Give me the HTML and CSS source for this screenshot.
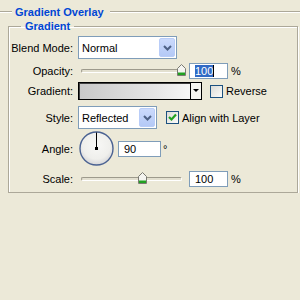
FILE: index.html
```html
<!DOCTYPE html>
<html lang="en">
<head>
    <meta charset="UTF-8">
    <title>Gradient Overlay</title>
    <link rel="stylesheet" href="styles.css">
</head>
<body>
    <div class="panel">
        <div class="group-title">
            <span class="rule rule-short"></span>
            <span class="title">Gradient Overlay</span>
            <span class="rule"></span>
        </div>

        <fieldset class="group">
            <legend>Gradient</legend>

            <div class="row row-blend">
                <span class="lbl">Blend Mode:</span>
                <div class="combo combo-blend">
                    <span class="combo-text">Normal</span>
                    <span class="combo-btn">
                        <svg width="9" height="6" viewBox="0 0 9 6"><polyline points="1,1 4.5,4.5 8,1" fill="none" stroke="#4d6185" stroke-width="2"/></svg>
                    </span>
                </div>
            </div>

            <div class="row row-opacity">
                <span class="lbl">Opacity:</span>
                <div class="slider">
                    <span class="track"></span>
                    <span class="thumb" style="--pos: 1">
                        <svg width="9" height="12" viewBox="0 0 9 12"><path d="M0.5 4.5 L4.5 0.5 L8.5 4.5 V11.5 H0.5 Z" fill="#f4f4f0" stroke="#7a7a72"/><rect x="1" y="8.5" width="7" height="2.5" fill="#21a121"/></svg>
                    </span>
                </div>
                <div class="field field-num"><span class="sel">100</span><span class="caret"></span></div>
                <span class="unit">%</span>
            </div>

            <div class="row row-gradient">
                <span class="lbl">Gradient:</span>
                <div class="grad-box">
                    <span class="grad-fill"></span>
                    <span class="grad-arrow"></span>
                </div>
                <span class="check"></span>
                <span class="check-label">Reverse</span>
            </div>

            <div class="row row-style">
                <span class="lbl">Style:</span>
                <div class="combo combo-style">
                    <span class="combo-text">Reflected</span>
                    <span class="combo-btn">
                        <svg width="9" height="6" viewBox="0 0 9 6"><polyline points="1,1 4.5,4.5 8,1" fill="none" stroke="#4d6185" stroke-width="2"/></svg>
                    </span>
                </div>
                <span class="check check-on">
                    <svg width="11" height="11" viewBox="0 0 11 11"><polyline points="2,5 4.5,7.5 9,2.5" fill="none" stroke="#21a121" stroke-width="2.2"/></svg>
                </span>
                <span class="check-label">Align with Layer</span>
            </div>

            <div class="row row-angle">
                <span class="lbl">Angle:</span>
                <svg class="dial" width="35" height="35" viewBox="0 0 35 35">
                    <defs>
                        <radialGradient id="dialFill" cx="50%" cy="40%" r="60%">
                            <stop offset="0" stop-color="#f8f8f6"/>
                            <stop offset="0.7" stop-color="#efefec"/>
                            <stop offset="1" stop-color="#d6d6d8"/>
                        </radialGradient>
                    </defs>
                    <circle cx="17.5" cy="17.5" r="16.5" fill="url(#dialFill)" stroke="#4a6292" stroke-width="1.4"/>
                    <line x1="17.5" y1="17.5" x2="17.5" y2="1.5" stroke="#000" stroke-width="1"/>
                    <rect x="16" y="16" width="3" height="3" fill="#000"/>
                </svg>
                <div class="field field-angle">90</div>
                <span class="unit unit-deg">°</span>
            </div>

            <div class="row row-scale">
                <span class="lbl">Scale:</span>
                <div class="slider">
                    <span class="track"></span>
                    <span class="thumb" style="--pos: 0.615">
                        <svg width="9" height="12" viewBox="0 0 9 12"><path d="M0.5 4.5 L4.5 0.5 L8.5 4.5 V11.5 H0.5 Z" fill="#f4f4f0" stroke="#7a7a72"/><rect x="1" y="8.5" width="7" height="2.5" fill="#21a121"/></svg>
                    </span>
                </div>
                <div class="field field-num">100</div>
                <span class="unit">%</span>
            </div>
        </fieldset>
    </div>
</body>
</html>
```

FILE: styles.css
```css
body {
    margin: 0;
    background: #ece9d8;
    font-family: "Liberation Sans", Arial, sans-serif;
    font-size: 11px;
    color: #000;
}
.panel {
    padding-top: 5px;
}
.group-title {
    display: flex;
    align-items: center;
    height: 14px;
}
.rule {
    flex: 1;
    height: 1px;
    background: #aca899;
    border-bottom: 1px solid #fff;
}
.rule-short {
    flex: 0 0 12px;
}
.title {
    padding: 0 6px 0 3px;
    color: #0046d5;
    font-weight: bold;
}
.group {
    margin: 0 2px 0 8px;
    padding: 3px 0 5px;
    border: 1px solid #aca899;
    box-shadow: 1px 1px 0 #fff, inset 1px 1px 0 #fff;
    min-width: 0;
}
.group legend {
    margin-left: 12px;
    padding: 0 4px;
    color: #0046d5;
    font-weight: bold;
    line-height: 14px;
}
.row {
    display: flex;
    align-items: center;
}
.row-blend { height: 23px; }
.row-opacity { height: 16px; margin-top: 4px; }
.row-gradient { height: 18px; margin-top: 3px; }
.row-style { height: 23px; margin-top: 6px; }
.row-angle { height: 35px; margin-top: 2px; }
.row-scale { height: 16px; margin-top: 5px; }
.lbl {
    flex: none;
    width: 64px;
    margin-right: 5px;
    text-align: right;
}

/* combo boxes */
.combo {
    box-sizing: border-box;
    display: flex;
    align-items: stretch;
    height: 23px;
    padding: 1px;
    border: 1px solid #7f9db9;
    background: #fff;
}
.combo-blend { width: 99px; }
.combo-style { width: 79px; }
.combo-text {
    flex: 1;
    display: flex;
    align-items: center;
    padding-left: 2px;
    padding-top: 1px;
}
.combo-btn {
    box-sizing: border-box;
    width: 16px;
    display: flex;
    align-items: center;
    justify-content: center;
    border: 1px solid #b9cdf8;
    border-radius: 2px;
    background: linear-gradient(#cbdafc, #b4c9f6);
}

/* sliders */
.slider {
    position: relative;
    flex: none;
    width: 108px;
    height: 16px;
}
.track {
    position: absolute;
    left: 3px;
    right: 4px;
    top: 6px;
    height: 2px;
    border: 1px solid;
    border-color: #9d9a8c #fff #fff #9d9a8c;
    border-radius: 2px;
    background: #e3e0d0;
}
.thumb {
    position: absolute;
    top: 1px;
    left: calc(3px + var(--pos) * 101px - 5px);
    width: 9px;
    height: 12px;
}
.thumb svg {
    display: block;
}

/* text fields */
.field {
    box-sizing: border-box;
    display: flex;
    align-items: center;
    height: 16px;
    padding-left: 5px;
    border: 1px solid #7f9db9;
    background: #fff;
}
.field-num {
    width: 39px;
    margin-left: 3px;
}
.field-angle {
    width: 43px;
    margin-left: 4px;
}
.sel {
    background: #316ac5;
    color: #fff;
    line-height: 12px;
}
.caret {
    width: 1px;
    height: 12px;
    background: #000;
}
.unit {
    margin-left: 3px;
}
.unit-deg {
    margin-left: 2px;
}

/* gradient picker */
.grad-box {
    box-sizing: border-box;
    display: flex;
    width: 124px;
    height: 18px;
    border: 1px solid #000;
    box-shadow: inset 1px 1px 0 #404040;
}
.grad-fill {
    flex: 1;
    margin: 1px 0 0 1px;
    background: linear-gradient(to right, #c9c9c9, #e6e6e6 70%, #f6f6f6);
}
.grad-arrow {
    position: relative;
    width: 10px;
    border-left: 1px solid #000;
    background: #f6f5f0;
}
.grad-arrow::after {
    content: "";
    position: absolute;
    left: 2px;
    top: 6px;
    border-left: 3px solid transparent;
    border-right: 3px solid transparent;
    border-top: 3px solid #000;
}

/* checkboxes */
.check {
    box-sizing: border-box;
    display: flex;
    align-items: center;
    justify-content: center;
    width: 13px;
    height: 13px;
    margin-left: 8px;
    border: 1px solid #1c5180;
    background: linear-gradient(135deg, #dcdcd7, #fbfbf9);
}
.check-on {
    margin-left: 9px;
}
.check-label {
    margin-left: 3px;
}
.dial {
    flex: none;
    margin-left: 1px;
}
```
